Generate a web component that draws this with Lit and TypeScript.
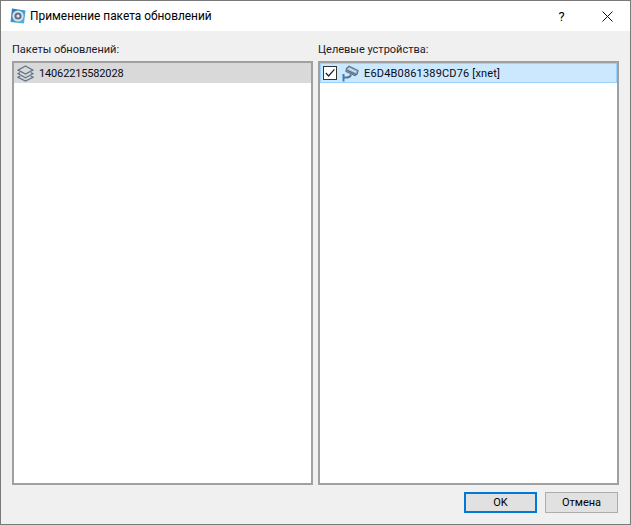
import { LitElement, html, css } from "lit";
import { customElement } from "lit/decorators.js";

@customElement("app-root")
export class AppRoot extends LitElement {
  static styles = css`
    :host {
      display: flex;
      flex-direction: column;
      position: relative;
      box-sizing: border-box;
      width: 631px;
      height: 525px;
      border: 1px solid #7a7a7a;
      background: #f0f0f0;
      font-family: Roboto, "Noto Sans", sans-serif;
      font-size: 12px;
      color: #000;
      overflow: hidden;
    }
    .titlebar {
      display: flex;
      align-items: center;
      height: 30px;
      background: #fff;
      padding-left: 8px;
      flex: none;
    }
    .appicon { width: 18px; height: 18px; flex: none; }
    .title { margin-left: 3px; font-size: 11.9px; line-height: 16px; flex: 1; }
    .help {
      width: 45px;
      text-align: center;
      font-size: 13px;
      padding-left: 1px;
    }
    .close {
      width: 46px;
      display: flex;
      justify-content: center;
      align-items: center;
    }
    .body {
      flex: 1;
      display: flex;
      flex-direction: column;
      padding: 12px 11px 11px 11px;
      min-height: 0;
    }
    .columns {
      flex: 1;
      display: grid;
      grid-template-columns: 301px 301px;
      column-gap: 5px;
      min-height: 0;
    }
    .col { display: flex; flex-direction: column; min-height: 0; }
    .label { height: 18px; line-height: 14px; color: #1a1a2a; font-size: 11px; }
    .list {
      flex: 1;
      box-sizing: border-box;
      background: #fff;
      border: 2px solid #a0a0a0;
      padding: 0;
    }
    .item {
      display: flex;
      align-items: center;
      height: 20px;
      box-sizing: border-box;
      font-size: 11px;
    }
    .item.gray { background: #d9d9d9; padding-left: 3px; }
    .item.blue {
      background: #cce8ff;
      border: 1px solid #99d1ff;
      padding-left: 2px;
    }
    .item span { color: #0a0a14; }
    .gray span { margin-left: 5px; letter-spacing: -0.15px; }
    .blue span { margin-left: 5px; letter-spacing: 0.17px; }
    .check {
      width: 14px;
      height: 14px;
      box-sizing: border-box;
      border: 1px solid #333;
      background: #fff;
      display: flex;
      flex: none;
    }
    .cam { margin-left: 5px; flex: none; }
    .footer {
      flex: none;
      display: flex;
      justify-content: flex-end;
      gap: 8px;
      margin-top: 7px;
      padding-right: 1px;
    }
    button {
      width: 73px;
      height: 21px;
      box-sizing: border-box;
      background: #e1e1e1;
      border: 1px solid #adadad;
      font: inherit;
      font-size: 11px;
      color: #000;
      padding: 0;
      line-height: 1;
    }
    button.default { border: 2px solid #0078d7; }
    .sliver {
      position: absolute;
      left: -1px;
      top: 157px;
      width: 1px;
      height: 11px;
      background: #4a8a94;
    }
  `;

  render() {
    return html`
      <div class="titlebar">
        <svg class="appicon" viewBox="0 0 18 18">
          <defs>
            <linearGradient id="g" x1="0" y1="0" x2="1" y2="1">
              <stop offset="0" stop-color="#2f6fb5" />
              <stop offset="1" stop-color="#4cc4e0" />
            </linearGradient>
          </defs>
          <path d="M3 1.5 L16.5 3.5 L15 16.5 L1.5 15 Z" fill="url(#g)" />
          <circle cx="9" cy="9" r="5.6" fill="#dfe3e8" />
          <circle cx="9" cy="9" r="3.6" fill="#5f7186" />
          <circle cx="9" cy="9" r="1.5" fill="#e8edf2" />
        </svg>
        <div class="title">Применение пакета обновлений</div>
        <div class="help">?</div>
        <div class="close">
          <svg width="11" height="11" viewBox="0 0 11 11">
            <path d="M.5 .5 L10.5 10.5 M10.5 .5 L.5 10.5" stroke="#111" stroke-width="1" fill="none" />
          </svg>
        </div>
      </div>
      <div class="body">
        <div class="columns">
          <div class="col">
            <div class="label">Пакеты обновлений:</div>
            <div class="list">
              <div class="item gray">
                <svg width="17" height="17" viewBox="0 0 16 16" fill="none" stroke="#5f7589" stroke-width="1.2">
                  <path d="M8 1 L15 4.8 L8 8.6 L1 4.8 Z" />
                  <path d="M3 7 L1 8.2 L8 12 L15 8.2 L13 7" />
                  <path d="M3 10.4 L1 11.5 L8 15.2 L15 11.5 L13 10.4" />
                </svg>
                <span>14062215582028</span>
              </div>
            </div>
          </div>
          <div class="col">
            <div class="label">Целевые устройства:</div>
            <div class="list">
              <div class="item blue">
                <div class="check">
                  <svg width="12" height="12" viewBox="0 0 12 12" fill="none" stroke="#222" stroke-width="1.3">
                    <path d="M1.8 6 L4.6 9 L10.4 2.4" />
                  </svg>
                </div>
                <svg class="cam" width="17" height="17" viewBox="0 0 17 17">
                  <path d="M4.5 3.5 L7 1.2 L16 5.5 L15.2 9 L13 10.5 L4 6.5 Z" fill="#a9bccb" stroke="#55748f" stroke-width="1.2" />
                  <path d="M6.5 3.4 L14 7" stroke="#e6eff6" stroke-width="1" />
                  <path d="M5 5.4 L14.5 9.6" stroke="#55748f" stroke-width="1.3" />
                  <path d="M9 9.5 L8 11.5 L5.5 12.5" stroke="#55748f" stroke-width="2" fill="none" />
                  <path d="M1.5 9 L1.5 16.5 M1.5 12.5 L6 12.5" stroke="#4a7aa8" stroke-width="2" fill="none" />
                </svg>
                <span>E6D4B0861389CD76 [xnet]</span>
              </div>
            </div>
          </div>
        </div>
        <div class="footer">
          <button class="default">OK</button>
          <button>Отмена</button>
        </div>
      </div>
      <div class="sliver"></div>
    `;
  }
}
